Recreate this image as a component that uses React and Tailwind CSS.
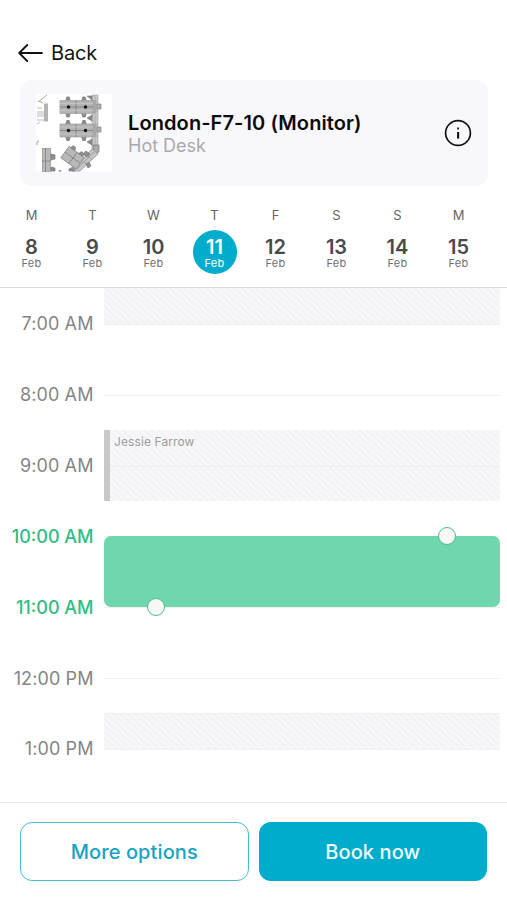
/**
 * Desk Booking Page
 */
import React from 'react';

const days = [
  { id: 8, letter: 'M' },
  { id: 9, letter: 'T' },
  { id: 10, letter: 'W' },
  { id: 11, letter: 'T', selected: true },
  { id: 12, letter: 'F' },
  { id: 13, letter: 'S' },
  { id: 14, letter: 'S' },
  { id: 15, letter: 'M' },
];

const hours = [
  { label: '7:00 AM' },
  { label: '8:00 AM' },
  { label: '9:00 AM' },
  { label: '10:00 AM', active: true },
  { label: '11:00 AM', active: true },
  { label: '12:00 PM' },
  { label: '1:00 PM' },
];

const stripes =
  'bg-[repeating-linear-gradient(42deg,#f7f7f9_0px,#f7f7f9_2.2px,#f0f0f2_3.500px,#f7f7f9_4.800px)]';

const BackArrow = () => (
  <svg width="25" height="18" viewBox="0 0 25 18" fill="none" stroke="#111" strokeWidth="1.8" strokeLinecap="round" strokeLinejoin="round">
    <path d="M24 9H1.2M9.200 1 1.2 9l8 8" />
  </svg>
);

const InfoIcon = () => (
  <svg width="28" height="28" viewBox="0 0 28 28" fill="none" stroke="#111">
    <circle cx="14" cy="14" r="12.4" strokeWidth="1.7" />
    <path d="M14.1 13v6.600" strokeWidth="2.1" />
    <path d="M14.1 8.600v2" strokeWidth="1.7" />
  </svg>
);

// Two desks facing two desks, with a chair on each
const DeskBlock = () => (
  <g>
    {[8, 24].map((x) => (
      <g key={x} fill="#8f8f8f" stroke="#777" strokeWidth="0.8">
        <path d={`M${x - 2.2} 0l1-3.500h2.4l1 3.500z`} />
        <path d={`M${x - 2.2} 13l1 3.500h2.4l1-3.500z`} />
      </g>
    ))}
    <rect width="33" height="13" fill="#b4b4b4" stroke="#a0a0a0" strokeWidth="0.7" />
    <path d="M0 6.500h33M16 0v13" stroke="#808080" strokeWidth="0.9" />
    <path d="M0 3h33M0 10h33" stroke="#c6c6c6" strokeWidth="0.9" />
    <circle cx="8.500" cy="6.500" r="1.7" fill="#111" />
    <circle cx="25.500" cy="6.500" r="1.7" fill="#111" />
  </g>
);

const FloorPlan = () => (
  <svg width="76" height="78" viewBox="0 0 76 78">
    <rect width="76" height="78" rx="2" fill="#fff" />
    <path d="M2 8 11 1M3 7l4 2" stroke="#aaa" fill="none" />
    <path d="M1 14h5M1 18h11M1 20h11M1 22h11M1 26h11M1 30l3-2" stroke="#bbb" fill="none" />
    <rect x="8" y="9.500" width="4" height="18" fill="#b4b4b4" />
    <path d="M1 51v-3l2-1" stroke="#999" fill="none" />
    {/* desks along the wall */}
    <rect x="56" y="1" width="6" height="55" fill="#c8c8c8" stroke="#aaa" strokeWidth="0.7" />
    <path d="M56 17h6M56 30h6M56 42h6M59 1v55" stroke="#a8a8a8" strokeWidth="0.7" />
    <path d="M51 2h5v4zM51 24l5-3v6zM51 48l5-3v6z" fill="#8a8a8a" stroke="#777" strokeWidth="0.6" />
    <rect x="54.500" y="6" width="6" height="13" fill="#a9a9a9" />
    <rect x="54.500" y="30" width="6" height="13" fill="#a9a9a9" />
    <path d="M61 10h4v5h-4zM61 33h4v5h-4z" fill="#b0b0b0" stroke="#888" strokeWidth="0.7" />
    <path d="M57 51h6v7l-5 2z" fill="#aaa" stroke="#777" strokeWidth="0.7" />
    <path d="m56 55 6 5-18 17h-8z" fill="#c4c4c4" stroke="#999" strokeWidth="0.8" />
    <path d="m58 58-17 17M50 60l6 6M45 65l6 6" stroke="#999" strokeWidth="0.8" />
    <path d="m47 60 3-3 4 3-3 3zM50 70l3-2 2 4-3 2zM33 75l4-2 2 4h-6z" fill="#8f8f8f" stroke="#777" strokeWidth="0.7" />
    <g transform="translate(24 6.500)">
      <DeskBlock />
    </g>
    <g transform="translate(24 30)">
      <DeskBlock />
    </g>
    {/* corner group */}
    <g transform="rotate(36 36 62)">
      <rect x="28" y="56" width="19" height="14" fill="#b8b8b8" stroke="#888" strokeWidth="0.8" />
      <path d="M28 63h19M38 56v14" stroke="#808080" strokeWidth="0.8" />
      <path d="M30 56l1-3h3l1 3zM40 56l1-3h3l1 3z" fill="#8f8f8f" stroke="#777" strokeWidth="0.7" />
    </g>
    <g>
      <rect x="6.500" y="54.500" width="8" height="23" fill="#b8b8b8" stroke="#999" strokeWidth="0.8" />
      <path d="M9.500 54v24M6 67h9" stroke="#808080" strokeWidth="0.8" />
      <path d="M15 60l4 1v4l-4 1zM15 73l4 1v3h-4z" fill="#8f8f8f" stroke="#777" strokeWidth="0.7" />
      <path d="M22.500 77.500a1.500 1.500 0 0 1 3 0z" fill="#777" />
    </g>
  </svg>
);

const DayCell = ({ day }) => (
  <div className="flex flex-col items-center">
    <span className="text-[13px] leading-4 text-[#666]">{day.letter}</span>
    <div
      className={`mt-[7px] flex h-11 w-11 flex-col items-center rounded-full pt-[7px] ${
        day.selected ? 'bg-[#00accb] text-white' : 'text-[#4a4a4a]'
      }`}
    >
      <span className="text-[20px] leading-5 font-semibold">{day.id}</span>
      <span className={`text-[11px] leading-[12px] tracking-[0.2px] ${day.selected ? 'text-white' : 'text-[#707070]'}`}>
        Feb
      </span>
    </div>
  </div>
);

const Handle = ({ className }) => (
  <span className={`absolute h-[18px] w-[18px] rounded-full border-[1.5px] border-[#4cc091] bg-[#f7f7f5] ${className}`} />
);

const Timeline = () => (
  <div className="grid flex-1 grid-cols-[93.500px_396px] grid-rows-[36.500px_repeat(13,35.42px)] content-start gap-x-[10.500px] overflow-hidden">
    {hours.map((hour, i) => (
      <div
        key={hour.label}
        className={`col-start-1 flex items-center justify-end text-[18px] whitespace-nowrap ${
          hour.active ? 'text-[#2fbd84]' : 'text-[#858585]'
        } ${hour.active ? 'font-medium' : 'tracking-[0.1px]'}`}
        style={{ gridRow: `${i * 2 + 1} / span 2` }}
      >
        {hour.label}
      </div>
    ))}

    {/* Hour lines */}
    {hours.map((hour, i) => (
      <div
        key={hour.label}
        className="col-start-2 border-t border-[#f0f0f0]"
        style={{ gridRow: `${i * 2 + 2} / span 1` }}
      />
    ))}

    {/* Unavailable slots */}
    <div className={`col-start-2 row-start-1 ${stripes}`} />
    <div className={`col-start-2 row-span-2 row-start-5 grid grid-rows-2 border-l-[6px] border-[#c8c8c8] ${stripes}`}>
      <div className="pt-1 pl-1 text-[12px] leading-4 tracking-[0.1px] text-[#9c9c9f]">
        Jessie Farrow
      </div>
      <div className="border-t border-[#eeeeef]" />
    </div>
    <div className={`col-start-2 row-start-13 border-t border-[#efeff1] ${stripes}`} />

    {/* Selected slot */}
    <div className="relative col-start-2 row-span-2 row-start-8 rounded-[7px] bg-[#70d6ae]">
      <Handle className="-top-[9px] right-[44px]" />
      <Handle className="-bottom-[9px] left-[43px]" />
    </div>
  </div>
);

export default function App() {
  return (
    <div className="flex h-[900px] w-[507px] flex-col overflow-hidden bg-white font-['Inter','Liberation_Sans',sans-serif]">
      <header className="flex h-20 items-end gap-2 pb-[15px] pl-[18px]">
        <div className="flex h-6 items-center">
          <BackArrow />
        </div>
        <span className="text-[20px] leading-6 tracking-[-0.2px] text-[#151515]">Back</span>
      </header>

      {/* Desk card */}
      <section className="mx-5 flex h-[106px] w-[468px] shrink-0 items-center rounded-xl bg-[#f8f8fc] px-4">
        <FloorPlan />
        <div className="ml-4 flex-1 pt-[2px]">
          <h1 className="text-[20px] leading-6 font-semibold tracking-[0.1px] text-[#0c0c0c]">London-F7-10 (Monitor)</h1>
          <p className="text-[18px] leading-[22px] text-[#a9a9ad]">Hot Desk</p>
        </div>
        <InfoIcon />
      </section>

      {/* Day picker */}
      <nav className="grid h-[100.500px] w-[489px] shrink-0 grid-cols-8 pt-[21px] pl-px">
        {days.map((day) => (
          <DayCell key={day.id} day={day} />
        ))}
      </nav>
      <div className="h-px shrink-0 bg-[#dfdfdf]" />

      <Timeline />

      <footer className="flex h-[98px] shrink-0 gap-[10px] border-t border-[#ebebeb] px-5 pt-[19px]">
        <button className="h-[59px] w-[229px] rounded-xl border-[1.5px] border-[#45bdd2] text-[20px] font-medium tracking-[0.1px] text-[#14a5c1]">
          More options
        </button>
        <button className="h-[59px] w-[229px] rounded-xl bg-[#00accb] text-[20px] font-medium tracking-[0.1px] text-[#eefbff]">
          Book now
        </button>
      </footer>
    </div>
  );
}
